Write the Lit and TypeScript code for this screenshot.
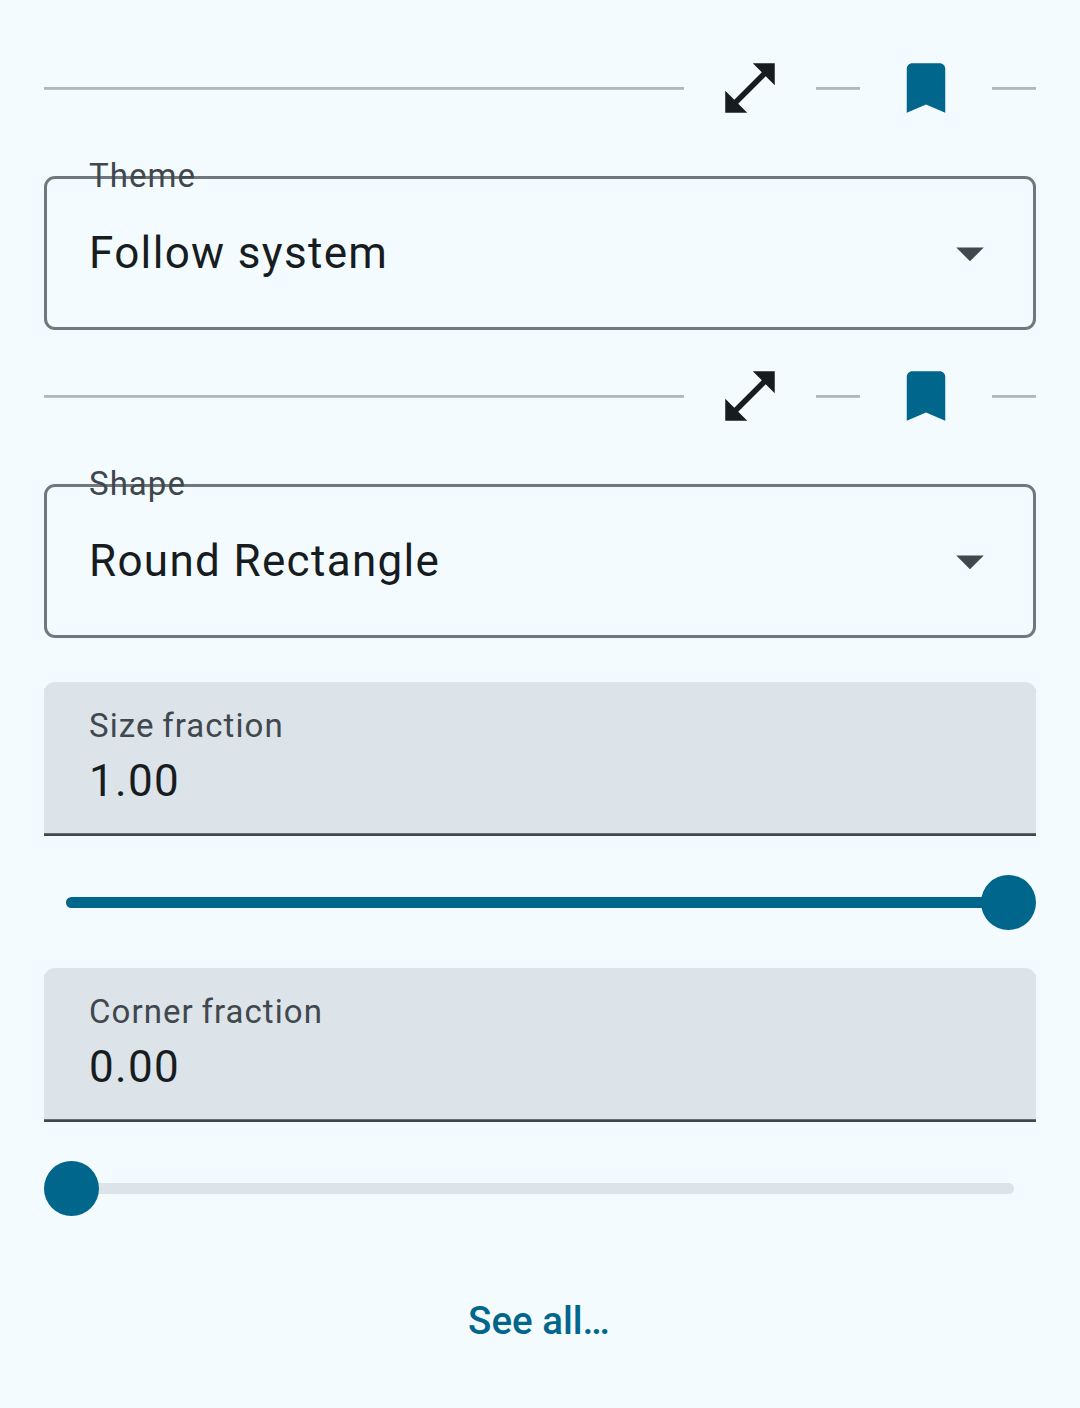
import { LitElement, html, css } from "lit";
import { customElement, property } from "lit/decorators.js";

const tokens = css`
  :host {
    display: block;
    box-sizing: border-box;
    font-family: Roboto, "Liberation Sans", sans-serif;
    color: #171c1f;
  }
  .label {
    font-size: 33px;
    line-height: 44px;
    letter-spacing: 1.05px;
    word-spacing: -1.5px;
    color: #41484d;
    white-space: nowrap;
  }
  .value {
    font-size: 44px;
    line-height: 66px;
    letter-spacing: 1.33px;
    color: #171c1f;
    white-space: nowrap;
  }
`;

@customElement("option-toolbar")
export class OptionToolbar extends LitElement {
  static styles = [
    tokens,
    css`
      .row {
        display: flex;
        align-items: center;
        height: 132px;
      }
      .line {
        width: 44px;
        height: 2px;
        background: #b0b8bb;
        border-bottom: 1px solid #bac2c6;
      }
      .grow {
        flex: 1;
      }
      .action {
        display: flex;
        align-items: center;
        justify-content: center;
        width: 132px;
        height: 132px;
        padding: 0;
        border: 0;
        background: none;
        color: #171c1f;
      }
      .marked {
        color: #00668b;
      }
      svg {
        width: 66px;
        height: 66px;
        fill: currentColor;
      }
    `,
  ];

  render() {
    return html`
      <div class="row">
        <div class="line grow"></div>
        <button class="action">
          <svg viewBox="0 0 24 24">
            <path d="M21 11V3h-8l3.29 3.29-10 10L3 13v8h8l-3.29-3.29 10-10z" />
          </svg>
        </button>
        <div class="line"></div>
        <button class="action marked">
          <svg viewBox="0 0 24 24">
            <path d="M17 3H7c-1.1 0-1.99.9-1.99 2L5 21l7-3 7 3V5c0-1.1-.9-2-2-2z" />
          </svg>
        </button>
        <div class="line"></div>
      </div>
    `;
  }
}

@customElement("select-field")
export class SelectField extends LitElement {
  @property() label = "";
  @property() value = "";

  static styles = [
    tokens,
    css`
      .box {
        position: relative;
        box-sizing: border-box;
        display: flex;
        align-items: center;
        justify-content: space-between;
        height: 154px;
        padding: 0 30px 0 42px;
        border: 3px solid #70787e;
        border-radius: 11px;
      }
      .label {
        position: absolute;
        left: 42px;
        top: -25px;
      }
      svg {
        width: 66px;
        height: 66px;
        fill: #41484d;
      }
    `,
  ];

  render() {
    return html`
      <div class="box">
        <span class="label">${this.label}</span>
        <span class="value">${this.value}</span>
        <svg viewBox="0 0 24 24"><path d="M7 10l5 5 5-5z" /></svg>
      </div>
    `;
  }
}

@customElement("number-field")
export class NumberField extends LitElement {
  @property() label = "";
  @property() value = "";

  static styles = [
    tokens,
    css`
      .box {
        box-sizing: border-box;
        display: flex;
        flex-direction: column;
        height: 154px;
        padding: 22px 45px 0;
        background: #dce3e9;
        border-bottom: 2px solid #41484d;
        box-shadow: inset 0 -1px #686f74;
        border-radius: 11px 11px 0 0;
      }
    `,
  ];

  render() {
    return html`
      <div class="box">
        <span class="label">${this.label}</span>
        <span class="value">${this.value}</span>
      </div>
    `;
  }
}

@customElement("range-slider")
export class RangeSlider extends LitElement {
  @property({ type: Number }) fraction = 0;

  static styles = [
    tokens,
    css`
      .slider {
        display: flex;
        align-items: center;
        height: 133px;
        margin-bottom: -1px;
      }
      .before,
      .after {
        height: 11px;
      }
      .before {
        margin-left: 21.5px;
        margin-right: -22px;
        border-radius: 5.5px 0 0 5.5px;
        background: #00668b;
      }
      .after {
        margin-left: -22px;
        margin-right: 22.5px;
        border-radius: 0 5.5px 5.5px 0;
        background: #dce3e9;
      }
      .thumb {
        z-index: 1;
        flex: none;
        width: 55px;
        height: 55px;
        border-radius: 50%;
        background: #00668b;
      }
    `,
  ];

  render() {
    const f = this.fraction;
    return html`
      <div class="slider">
        ${f > 0 ? html`<div class="before" style="flex:${f}"></div>` : ""}
        <div class="thumb"></div>
        ${f < 1 ? html`<div class="after" style="flex:${1 - f}"></div>` : ""}
      </div>
    `;
  }
}

@customElement("app-root")
export class AppRoot extends LitElement {
  static styles = [
    tokens,
    css`
      :host {
        height: 1408px;
        padding: 22px 44px;
        background: #f3fbff;
      }
      .select {
        margin-top: 22px;
      }
      .number {
        margin-top: 44px;
      }
      .flush {
        margin-top: 0;
      }
      .more {
        display: block;
        width: 100%;
        height: 132px;
        padding: 0 2px 0 0;
        border: 0;
        background: none;
        font: 500 38.5px/55px Roboto, "Liberation Sans", sans-serif;
        letter-spacing: 0;
        color: #00668b;
      }
    `,
  ];

  render() {
    return html`
      <option-toolbar></option-toolbar>
      <select-field class="select" label="Theme" value="Follow system"></select-field>
      <option-toolbar></option-toolbar>
      <select-field class="select" label="Shape" value="Round Rectangle"></select-field>
      <number-field class="number" label="Size fraction" value="1.00"></number-field>
      <range-slider fraction="1"></range-slider>
      <number-field class="flush" label="Corner fraction" value="0.00"></number-field>
      <range-slider fraction="0"></range-slider>
      <button class="more">See all…</button>
    `;
  }
}
